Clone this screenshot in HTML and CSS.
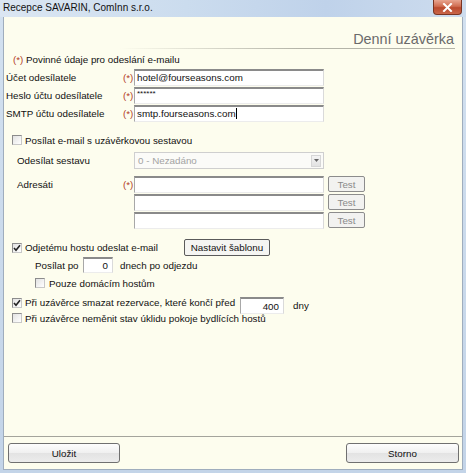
FILE: index.html
```html
<!DOCTYPE html>
<html lang="cs">
<head>
<meta charset="utf-8">
<title>Denní uzávěrka</title>
<link rel="stylesheet" href="styles.css">
</head>
<body>
<div class="window">
  <div class="titlebar">
    <span class="title">Recepce SAVARIN, ComInn s.r.o.</span>
    <div class="close">
      <svg width="11" height="9" viewBox="0 0 11 9"><path d="M2 1 L9 8 M9 1 L2 8" stroke="#fff" stroke-width="2" stroke-linecap="square"/></svg>
    </div>
  </div>
  <div class="frame">
    <div class="client">
      <div class="header"><h1>Denní uzávěrka</h1></div>
      <div class="form">
        <div class="req-note"><span class="req">(*)</span> Povinné údaje pro odeslání e-mailu</div>

        <div class="acct">
          <div class="row"><span class="lbl">Účet odesílatele</span><span class="req mark">(*)</span><div class="inp w190">hotel@fourseasons.com</div></div>
          <div class="row"><span class="lbl">Heslo účtu odesílatele</span><span class="req mark">(*)</span><div class="inp w190 pwd">******</div></div>
          <div class="row"><span class="lbl">SMTP účtu odesílatele</span><span class="req mark">(*)</span><div class="inp w190">smtp.fourseasons.com<span class="caret"></span></div></div>
        </div>

        <div class="crow top10"><span class="cb"></span><span>Posílat e-mail s uzávěrkovou sestavou</span></div>

        <div class="report">
          <div class="row sel-row"><span class="lbl2">Odesílat sestavu</span>
            <div class="select"><span>0 - Nezadáno</span><span class="drop"><svg width="5" height="3" viewBox="0 0 5 3"><path d="M0 0 H5 L2.5 3 Z" fill="#666"/></svg></span></div>
          </div>
          <div class="addr">
            <div class="row"><span class="lbl3">Adresáti</span><span class="req mark">(*)</span><div class="inp w190"></div><span class="test">Test</span></div>
            <div class="row"><span class="lbl2"></span><div class="inp w190"></div><span class="test">Test</span></div>
            <div class="row"><span class="lbl2"></span><div class="inp w190"></div><span class="test">Test</span></div>
          </div>
        </div>

        <div class="crow guest"><span class="cb on"><svg width="8" height="8" viewBox="0 0 8 8"><path d="M1 4 L3 6.3 L7 1.3" fill="none" stroke="#222" stroke-width="1.6"/></svg></span><span class="guest-lbl">Odjetému hostu odeslat e-mail</span><span class="btn-sm">Nastavit šablonu</span></div>

        <div class="days">
          <span class="days-lbl">Posílat po</span><div class="inp num w30">0</div><span class="days-after">dnech po odjezdu</span>
        </div>

        <div class="crow sub"><span class="cb"></span><span>Pouze domácím hostům</span></div>

        <div class="crow del"><span class="cb on"><svg width="8" height="8" viewBox="0 0 8 8"><path d="M1 4 L3 6.3 L7 1.3" fill="none" stroke="#222" stroke-width="1.6"/></svg></span><span class="del-lbl">Při uzávěrce smazat rezervace, které končí před</span><div class="inp num w44">400</div><span class="dny">dny</span></div>

        <div class="crow"><span class="cb"></span><span>Při uzávěrce neměnit stav úklidu pokoje bydlících hostů</span></div>
      </div>
      <div class="footer">
        <span class="btn save">Uložit</span>
        <span class="btn cancel">Storno</span>
      </div>
    </div>
  </div>
</div>
</body>
</html>
```

FILE: styles.css
```css
* { box-sizing: border-box; }

body {
  margin: 0;
  width: 466px;
  height: 473px;
  overflow: hidden;
  font-family: "Liberation Sans", Arial, sans-serif;
  font-size: 9.8px;
  color: #111;
  background: #cad9ea;
}

.window {
  width: 466px;
  height: 473px;
  display: flex;
  flex-direction: column;
  background: linear-gradient(to bottom, #d3e1f0, #c3d4e8);
}

.titlebar {
  height: 17px;
  display: flex;
  justify-content: space-between;
  align-items: flex-start;
  padding-left: 3px;
  background: linear-gradient(to right, #dbe6f2 0%, #cbdcee 40%, #bfd2ea 70%, #cddcee 100%);
}

.title {
  font-size: 10px;
  line-height: 15px;
  color: #111;
}

.close {
  width: 29px;
  height: 15px;
  margin-right: 4px;
  display: flex;
  align-items: center;
  justify-content: center;
  background: linear-gradient(to bottom, #e8a590 0%, #d06d51 45%, #bb4a2e 55%, #c9664a 100%);
  border: 1px solid #7a3422;
  border-top: none;
  border-radius: 0 0 4px 4px;
}

.frame {
  flex: 1;
  display: flex;
  padding: 0 3px 3px 3px;
}

.client {
  flex: 1;
  display: flex;
  flex-direction: column;
  background: #fdfdee;
  border-left: 1px solid #9fadbd;
  border-right: 1px solid #9fadbd;
  border-bottom: 1px solid #9fadbd;
}

.header {
  height: 32px;
  margin: 0 7px 0 4px;
  display: flex;
  align-items: flex-end;
  justify-content: flex-end;
  padding: 0 1px 2px 0;
  background: linear-gradient(to right, rgba(180,180,168,0) 0%, rgba(180,180,168,0) 25%, #b4b4a8 65%, #b4b4a8 100%) bottom / 100% 1px no-repeat;
}

.header h1 {
  margin: 0;
  font-weight: normal;
  font-size: 14.4px;
  line-height: 16px;
  color: #6a6a6a;
}

.form {
  flex: 1;
  padding-left: 2px;
}

.req { color: #b2401f; }

.req-note {
  margin-top: 4px;
  height: 14px;
  line-height: 14px;
  padding-left: 7px;
}

.acct { margin-top: 2px; }

.row {
  display: flex;
  align-items: flex-start;
  height: 18px;
}

.row .lbl {
  width: 117px;
  line-height: 17px;
}

.mark {
  width: 11px;
  line-height: 17px;
  white-space: nowrap;
}

.inp {
  height: 17px;
  background: #fff;
  border-style: solid;
  border-width: 2px 1px 1px 1px;
  border-color: #8a8a8a #dadada #ececec #a8a8a8;
  padding: 0 2px;
  line-height: 14px;
  white-space: nowrap;
  overflow: hidden;
}

.w190 { width: 190px; }
.w30 { width: 30px; }
.w44 { width: 44px; }

.pwd {
  font-size: 8px;
  line-height: 10px;
}

.caret {
  display: inline-block;
  width: 1px;
  height: 11px;
  background: #000;
  vertical-align: -2px;
}

.crow {
  display: flex;
  align-items: center;
  height: 14px;
  padding-left: 6px;
}

.top10 { margin-top: 10px; }

.cb {
  width: 10px;
  height: 10px;
  margin-right: 3px;
  flex: none;
  display: flex;
  align-items: center;
  justify-content: center;
  border: 1px solid;
  border-color: #8c8c8c #c8c8c8 #c8c8c8 #8c8c8c;
  background: linear-gradient(135deg, #e2e2e2, #ffffff);
}

.report {
  padding-left: 11px;
}

.sel-row { margin-top: 5px; }

.lbl2 {
  width: 117px;
  line-height: 17px;
}

.lbl3 {
  width: 106px;
  line-height: 17px;
}

.addr { margin-top: 6px; }

.select {
  width: 190px;
  height: 17px;
  display: flex;
  align-items: center;
  justify-content: space-between;
  padding: 0 2px 0 3px;
  background: #fbfbf8;
  border: 1px solid #cfcfcf;
  color: #a3a3a3;
}

.drop {
  width: 10px;
  height: 12px;
  display: flex;
  align-items: center;
  justify-content: center;
  background: linear-gradient(to bottom, #f4f4f4, #e2e2e2);
  border: 1px solid #d6d6d6;
}

.test {
  width: 37px;
  height: 16px;
  margin-left: 4px;
  display: flex;
  align-items: center;
  justify-content: center;
  background: #f2f2f0;
  border: 1px solid #8c8c8c;
  border-radius: 2px;
  color: #8a8a8a;
}

.guest {
  margin-top: 9px;
  height: 17px;
}

.guest-lbl { width: 159px; }

.btn-sm {
  height: 17px;
  display: flex;
  align-items: center;
  justify-content: center;
  width: 86px;
  background: #f5f5f2;
  border: 1px solid #5a5a5a;
  border-radius: 2px;
}

.days {
  display: flex;
  align-items: center;
  height: 16px;
  margin-top: 1px;
  padding-left: 29px;
}

.days-lbl { width: 48px; }

.num {
  text-align: right;
  padding-right: 4px;
}

.days .inp { height: 16px; }

.days-after { margin-left: 7px; }

.sub {
  margin-top: 3px;
  padding-left: 29px;
}

.sub .cb { margin-right: 4px; }

.del {
  margin-top: 5px;
  height: 16px;
  align-items: flex-start;
  padding-top: 1px;
}

.del .cb { margin-top: 2px; }

.del-lbl {
  width: 215px;
  line-height: 13px;
  white-space: nowrap;
}

.del .inp {
  margin-top: 1px;
  line-height: 15px;
}

.dny {
  margin-left: 9px;
  line-height: 18px;
  margin-top: 1px;
}

.footer {
  height: 33px;
  border-top: 1px solid #a4a49c;
  display: flex;
  justify-content: space-between;
  align-items: flex-start;
  padding: 6px 3px 0 4px;
}

.btn {
  height: 20px;
  display: flex;
  align-items: center;
  justify-content: center;
  background: linear-gradient(to bottom, #fdfdfd 0%, #f0f0f0 50%, #e3e3e3 51%, #ececec 100%);
  border: 1px solid #707070;
  border-radius: 3px;
}

.save { width: 112px; }
.cancel { width: 113px; }
```
